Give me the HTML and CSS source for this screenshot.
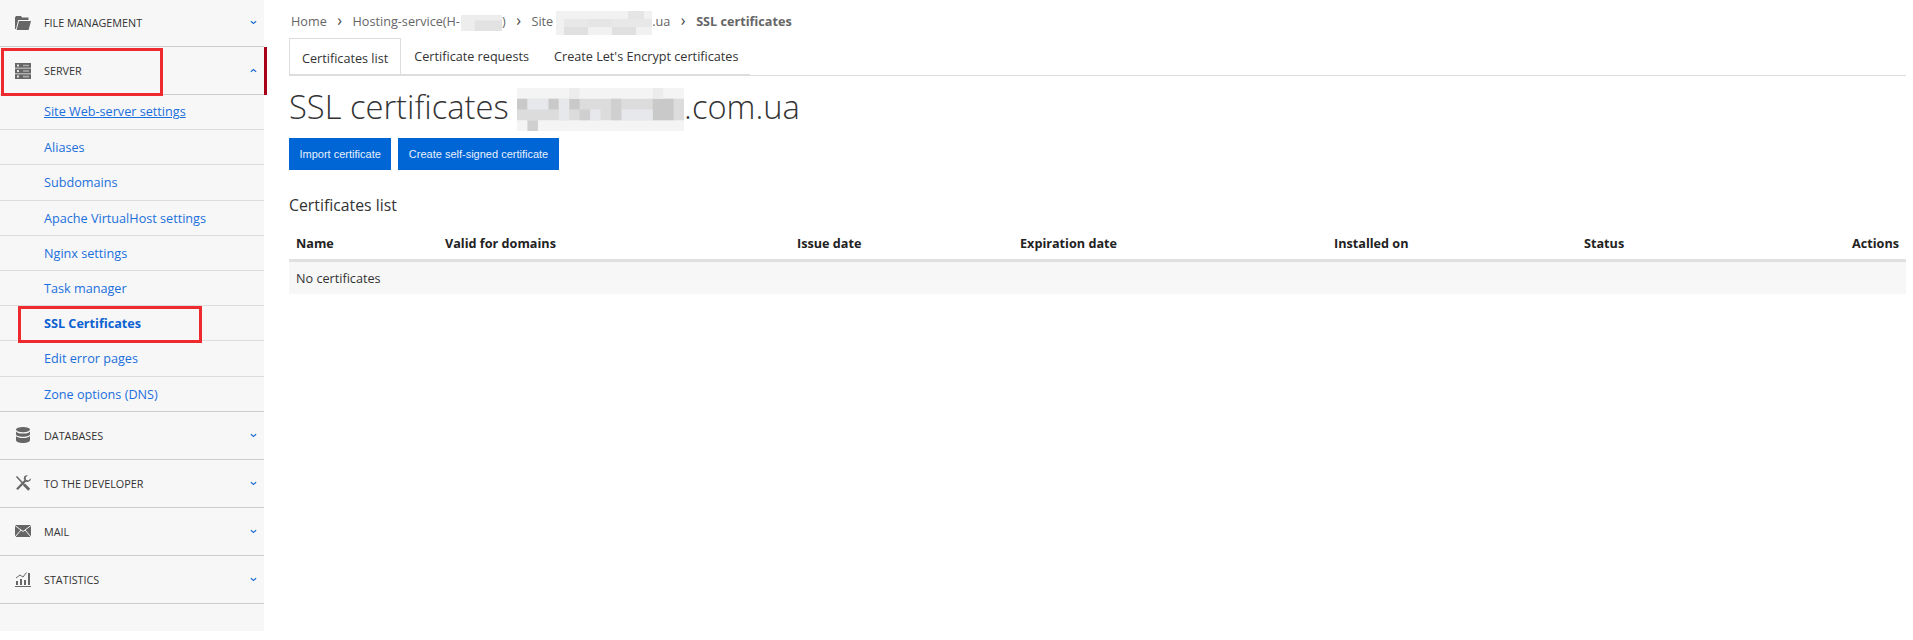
FILE: index.html
```html
<!DOCTYPE html>
<html>
	<head>
		<meta charset="utf-8">
		<title>SSL certificates</title>
		<link rel="stylesheet" href="styles.css">
	</head>
	<body>
		<div class="sidebar">
			<div class="menu-item">
				<svg class="menu-icon" viewBox="0 0 16 16"><path d="M0 2.500 1 1h5l1 1.500h6.500V5H3.200L1 14H0z"/><path d="M4 6h12L13.600 15H1.600z"/></svg>
				<span class="menu-title">File management</span>
				<svg class="chevron" viewBox="0 0 8 5"><path d="M1 1l3 2.600L7 1"/></svg>
			</div>
			<div class="menu-item current">
				<svg class="menu-icon" viewBox="0 0 16 16"><path d="M0 0h16v4.800H0zM0 5.600h16v4.800H0zM0 11.200h16V16H0z"/><path class="cut" d="M2 1.500h2v2H2zM2 7h2v2H2zM2 12.600h2v2H2z"/><path class="bar" d="M8 1.700h6v1.600H8zM8 7.200h6v1.600H8zM8 12.800h6v1.600H8z"/></svg>
				<span class="menu-title">Server</span>
				<svg class="chevron" viewBox="0 0 8 5"><path d="M1 4l3-2.600L7 4"/></svg>
			</div>
			<ul class="submenu">
				<li><a href="#" class="underlined">Site Web-server settings</a></li>
				<li><a href="#">Aliases</a></li>
				<li><a href="#">Subdomains</a></li>
				<li><a href="#">Apache VirtualHost settings</a></li>
				<li><a href="#">Nginx settings</a></li>
				<li><a href="#">Task manager</a></li>
				<li><a href="#" class="selected">SSL Certificates</a></li>
				<li><a href="#">Edit error pages</a></li>
				<li><a href="#">Zone options (DNS)</a></li>
			</ul>
			<div class="menu-item">
				<svg class="menu-icon" viewBox="0 0 16 16"><ellipse cx="8" cy="2.600" rx="7" ry="2.600"/><path d="M1 4.400C2 6 5 6.500 8 6.500S14 6 15 4.400V7.300C15 8.700 12 9.800 8 9.800S1 8.700 1 7.300z"/><path d="M1 9C2 10.500 5 11 8 11s6-.5 7-2v4C15 14.800 12 16 8 16S1 14.800 1 13z"/></svg>
				<span class="menu-title">Databases</span>
				<svg class="chevron" viewBox="0 0 8 5"><path d="M1 1l3 2.600L7 1"/></svg>
			</div>
			<div class="menu-item">
				<svg class="menu-icon" viewBox="0 0 16 16"><path class="line thin" d="M1.500 1.500 9 9.500"/><path class="line thick" d="M9 9.500 14.200 14.700"/><path class="line mid" d="M10.500 5.500 2 14.200"/><path d="M15.800 3.200 13.400 5.400 11 4.800 10.600 2.500 12.800.3C10.300-.3 8.300 1.600 8.900 4.200L11.200 6.700C13.900 7.600 16.300 5.600 15.800 3.200z"/></svg>
				<span class="menu-title">To the developer</span>
				<svg class="chevron" viewBox="0 0 8 5"><path d="M1 1l3 2.600L7 1"/></svg>
			</div>
			<div class="menu-item">
				<svg class="menu-icon" viewBox="0 0 16 16"><path d="M0 2h16v12H0z"/><path class="line light" d="M0 2.500 8 8.500l8-6M0 14l6-7M16 14l-6-7"/></svg>
				<span class="menu-title">Mail</span>
				<svg class="chevron" viewBox="0 0 8 5"><path d="M1 1l3 2.600L7 1"/></svg>
			</div>
			<div class="menu-item">
				<svg class="menu-icon" viewBox="0 0 16 16"><path d="M0 15h16v1H0zM1 10h2v4H1zM5 8h2v6H5zM9 9h2v5H9zM13 2h2v12h-2z"/><path class="line" d="M1 7l4-3 3 2 3.500-4.500"/></svg>
				<span class="menu-title">Statistics</span>
				<svg class="chevron" viewBox="0 0 8 5"><path d="M1 1l3 2.600L7 1"/></svg>
			</div>
		</div>

		<div class="mark mark-server"></div>
		<div class="mark mark-ssl"></div>

		<div class="content">
			<div class="breadcrumb">
				<a href="#">Home</a><span class="sep">›</span><a href="#">Hosting-service(H-<svg class="blur blur-id" viewBox="0 0 6 3" preserveAspectRatio="none"><path fill="#ededed" d="M0 0h6v3H0z"/><path fill="#e2e2e2" d="M2 1h4v2H2z"/></svg>)</a><span class="sep">›</span><a href="#">Site<svg class="blur blur-site" viewBox="0 0 12 3" preserveAspectRatio="none"><path fill="#f1f1f1" d="M0 0h12v3H0z"/><path fill="#e8e8e8" d="M1 1h11v1H1z"/><path fill="#e0e0e0" d="M1 2h3v1H1zM7 2h3v1H7z"/><path fill="#e5e5e5" d="M4 1h3v1H4zM9 0h2v1H9z"/></svg>.ua</a><span class="sep">›</span><b>SSL certificates</b>
			</div>

			<div class="tabs-line">
				<ul class="tabs">
					<li class="active">Certificates list</li>
					<li>Certificate requests</li>
					<li>Create Let's Encrypt certificates</li>
				</ul>
			</div>

			<h1>SSL certificates <svg class="blur blur-title" viewBox="0 0 16 4" preserveAspectRatio="none"><path fill="#f4f4f4" d="M0 0h16v4H0z"/><path fill="#dcdcdc" d="M0 1h16v2H0z"/><path fill="#c9c9c9" d="M0 1h1v1H0zM3 1h1v1H3zM5 1h1v1H5zM13 1h2v2H13z"/><path fill="#e6e8ec" d="M1 1h2v1H1zM4 1h1v2H4zM7 2h1v1H7zM10 2h3v1H10z"/><path fill="#cfcfcf" d="M1 3h1v1H1zM6 2h1v1H6zM9 1h1v2H9z"/><path fill="#ececec" d="M5 0h1v1H5zM13 0h1v1H13z"/></svg>.com.ua</h1>

			<div class="buttons">
				<a href="#" class="btn">Import certificate</a>
				<a href="#" class="btn">Create self-signed certificate</a>
			</div>

			<h2>Certificates list</h2>

			<table class="list">
				<colgroup>
					<col class="c1"><col class="c2"><col class="c3"><col class="c4"><col class="c5"><col class="c6"><col>
				</colgroup>
				<thead>
					<tr>
						<th>Name</th>
						<th>Valid for domains</th>
						<th>Issue date</th>
						<th>Expiration date</th>
						<th>Installed on</th>
						<th>Status</th>
						<th class="right">Actions</th>
					</tr>
				</thead>
				<tbody>
					<tr><td colspan="7">No certificates</td></tr>
				</tbody>
			</table>
		</div>
	</body>
</html>
```

FILE: styles.css
```css
html, body{
	margin: 0;
	padding: 0;
	height: 640px;
	overflow: hidden;
}
body{
	display: flex;
	align-items: flex-start;
	position: relative;
	background: #fff;
	font-family: "Open Sans", "Noto Sans", sans-serif;
	font-size: 12.65px;
	color: #333;
}
a{
	color: inherit;
	text-decoration: none;
}

/* left menu */
.sidebar{
	width: 264px;
	height: 632px;
	margin-top: -1px;
	flex: none;
	background: #f7f7f7;
}
.menu-item{
	height: 47px;
	border-bottom: 1px solid #ccc;
	display: flex;
	align-items: center;
	padding: 0 7px 0 15px;
	position: relative;
}
.menu-item.current::after{
	content: "";
	position: absolute;
	top: 0;
	bottom: -1px;
	right: -3px;
	width: 3px;
	background: #a80019;
}
.menu-icon{
	width: 16px;
	height: 16px;
	fill: #666;
	flex: none;
}
.menu-icon .cut{
	fill: #e4e4e4;
}
.menu-icon .bar{
	fill: #aaa;
}
.menu-icon .line{
	fill: none;
	stroke: #666;
	stroke-width: 1;
}
.menu-icon .thin{
	stroke-width: 1.600;
}
.menu-icon .mid{
	stroke-width: 2.200;
}
.menu-icon .thick{
	stroke-width: 2.800;
}
.menu-icon .light{
	stroke: #f7f7f7;
}
.menu-title{
	margin-left: 13px;
	flex: 1;
	font-size: 10.8px;
	text-transform: uppercase;
	color: #333;
}
.chevron{
	width: 7px;
	height: 5px;
	fill: none;
	stroke: #1b6fd3;
	stroke-width: 1.4;
}
.submenu{
	list-style: none;
	margin: 0;
	padding: 0;
	border-bottom: 1px solid #ccc;
}
.submenu li{
	height: 34.2px;
	line-height: 34px;
	padding-left: 44px;
	border-bottom: 1px solid #ddd;
}
.submenu li:first-child{
	line-height: 33px;
}
.submenu li:last-child{
	border-bottom: 0;
}
.submenu a{
	color: #1a6fdc;
}
.submenu a.underlined{
	text-decoration: underline;
}
.submenu a.selected{
	font-weight: 700;
	color: #0b62d1;
}

/* red frames drawn on the screenshot */
.mark{
	position: absolute;
	border: 3px solid #ee2a2e;
	box-sizing: border-box;
}
.mark-server{
	left: 1px;
	top: 48px;
	width: 162px;
	height: 48px;
}
.mark-ssl{
	left: 18px;
	top: 306px;
	width: 184px;
	height: 37px;
}

/* right part */
.content{
	flex: 1;
	min-width: 0;
	padding: 0 7px 0 25px;
}
.breadcrumb{
	height: 38px;
	line-height: 41px;
	padding-left: 2px;
	color: #666;
	white-space: nowrap;
}
.breadcrumb .sep{
	margin: 0 10.5px;
	font-size: 16px;
	color: #444;
}
.blur{
	vertical-align: middle;
}
.blur-id{
	width: 41px;
	height: 16px;
	margin-left: 1px;
}
.blur-site{
	width: 96px;
	height: 24px;
	margin: 0 0 0 3px;
}
.tabs-line{
	border-bottom: 1px solid #ddd;
}
.tabs{
	list-style: none;
	margin: 0;
	padding: 0;
	width: 461px;
	display: flex;
	height: 36px;
	border-bottom: 1px solid #ddd;
	color: #333;
	white-space: nowrap;
}
.tabs li{
	flex: none;
	padding: 0 12px 0 13px;
	line-height: 36px;
}
.tabs li.active{
	height: 36px;
	line-height: 38px;
	padding: 0 12px;
	border: 1px solid #ddd;
	border-bottom: 0;
}
h1{
	margin: 6px 0 0;
	font-size: 32.7px;
	font-weight: 300;
	line-height: 50px;
	color: #333;
	white-space: nowrap;
}
.blur-title{
	width: 167px;
	height: 43px;
	vertical-align: -12px;
}
.buttons{
	display: flex;
	gap: 7px;
	margin-top: 6px;
}
.btn{
	display: block;
	height: 32px;
	line-height: 32px;
	padding: 0 10.5px;
	background: #0066d6;
	color: #e8f0fb;
	font-family: "Liberation Sans", Arial, sans-serif;
	font-size: 11px;
}
h2{
	margin: 24px 0 0;
	font-size: 15.8px;
	font-weight: 400;
	line-height: 22px;
	color: #333;
}
.list{
	width: 100%;
	margin-top: 10px;
	border-collapse: collapse;
	table-layout: fixed;
}
.c1{ width: 149px; }
.c2{ width: 352px; }
.c3{ width: 223px; }
.c4{ width: 314px; }
.c5{ width: 250px; }
.c6{ width: 160px; }
.list th{
	height: 33px;
	padding: 0 7px;
	text-align: left;
	font-weight: 700;
	color: #222;
	border-bottom: 3px solid #e0e0e0;
}
.list th.right{
	text-align: right;
}
.list td{
	height: 32px;
	padding: 0 7px;
	background: #f7f7f7;
	color: #333;
}
```
